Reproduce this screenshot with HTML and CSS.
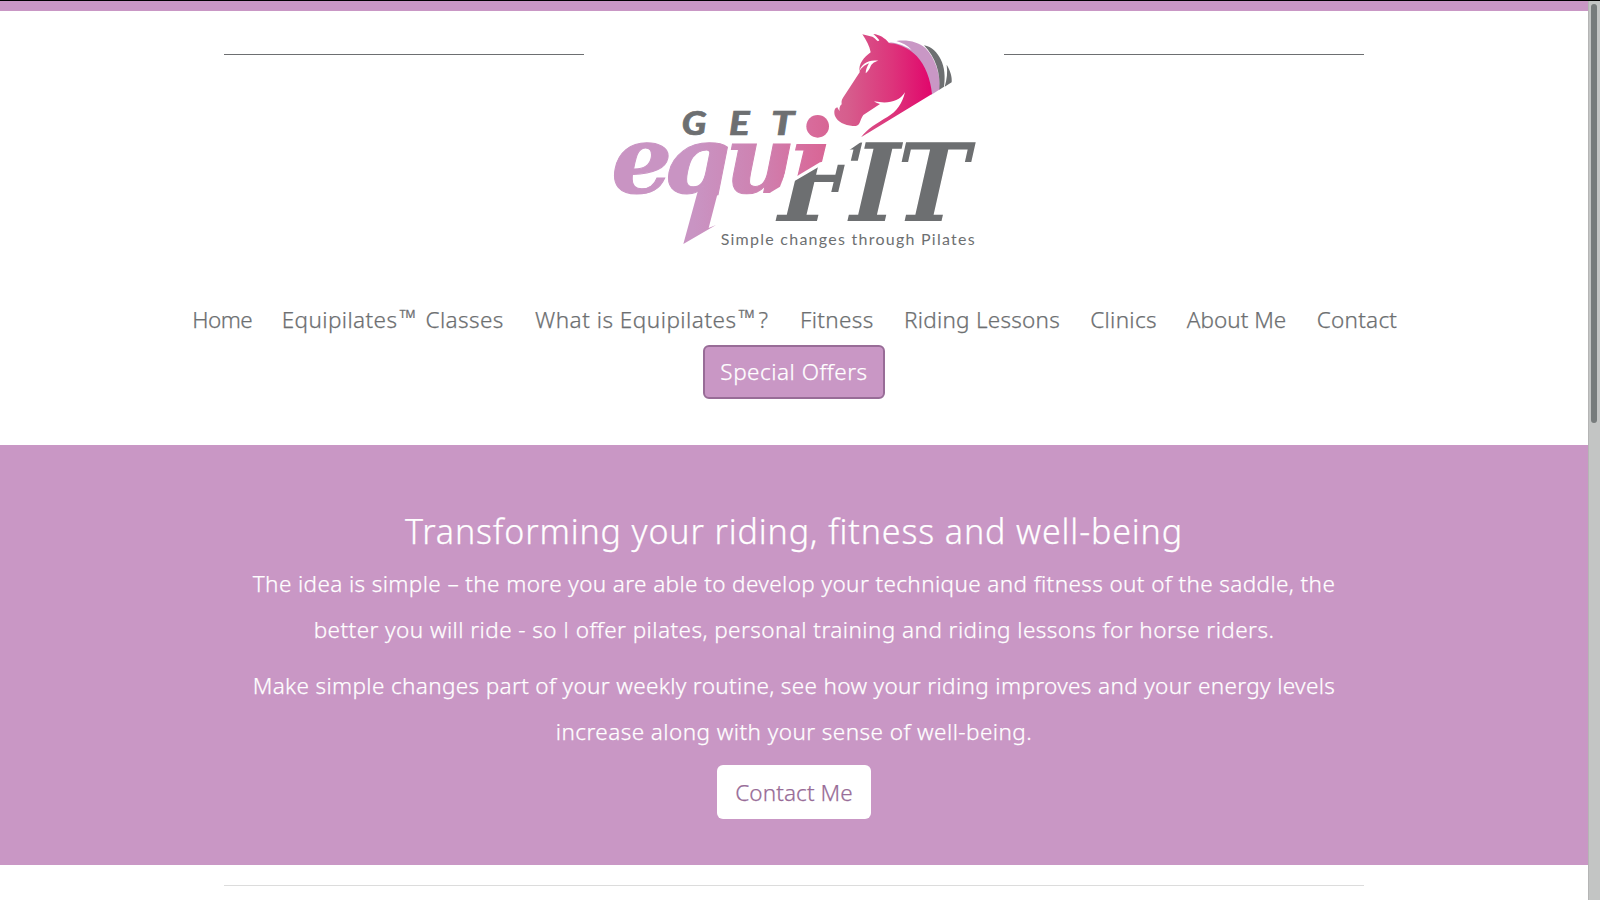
FILE: index.html
```html
<!DOCTYPE html>
<html lang="en">
<head>
<meta charset="utf-8">
<title>Get Equifit</title>
<link rel="stylesheet" href="styles.css">
</head>
<body>
<div class="page">
  <header class="header">
    <div class="brand">
      <hr class="rule">
      <svg class="logo" viewBox="-18 0 1200 720" role="img" aria-label="Get Equifit">
        <defs>
          <linearGradient id="pink" gradientUnits="userSpaceOnUse" x1="280" y1="0" x2="1000" y2="0">
            <stop offset="0" stop-color="#c994c3"/>
            <stop offset=".27" stop-color="#ce82b1"/>
            <stop offset=".5" stop-color="#d86a9a"/>
            <stop offset=".64" stop-color="#d65e8d"/>
            <stop offset=".83" stop-color="#dd347b"/>
            <stop offset="1" stop-color="#e1046b"/>
          </linearGradient>
          <clipPath id="above"><path d="M180 340H420V526H180z"/></clipPath>
          <clipPath id="ucut"><path d="M370 340H600L540 500L500 524H370z"/></clipPath>
          <clipPath id="icut"><path d="M560 367L690 361V420L660 427L585 472L560 480z"/></clipPath>
          <clipPath id="fcut"><path d="M500 530L580 485L662 437L745 392L782 367H800V620H500z"/></clipPath>
        </defs>
        <g class="get">
          <text x="245" y="346" textLength="74" lengthAdjust="spacingAndGlyphs">G</text><text x="387" y="346" textLength="62" lengthAdjust="spacingAndGlyphs">E</text><text x="513" y="346" textLength="70" lengthAdjust="spacingAndGlyphs">T</text>
        </g>
        <g class="equi">
          <text x="34" y="519" textLength="183" lengthAdjust="spacingAndGlyphs">e</text>
          <g clip-path="url(#above)"><text x="192" y="519" textLength="200" lengthAdjust="spacingAndGlyphs">q</text></g>
          <path d="M297 500L250 672L348 615L326 624L358 500z"/>
          <g clip-path="url(#ucut)"><text x="376" y="519" textLength="211" lengthAdjust="spacingAndGlyphs">u</text></g>
          <g clip-path="url(#icut)"><text x="562" y="519" textLength="132" lengthAdjust="spacingAndGlyphs">ı</text></g>
          <circle cx="653" cy="319" r="34"/>
        </g>
        <g class="fit">
          <g clip-path="url(#fcut)"><text transform="translate(534 604) skewX(-3)" textLength="222" lengthAdjust="spacingAndGlyphs">F</text></g>
          <text transform="translate(749 604) skewX(-3)" textLength="140" lengthAdjust="spacingAndGlyphs">I</text>
          <text transform="translate(882 604) skewX(-3)" textLength="215" lengthAdjust="spacingAndGlyphs">T</text>
        </g>
        <text class="tagline" x="362" y="675" textLength="762">Simple changes through Pilates</text>
        <g transform="translate(660 0)">
          <path fill="#c997c5" d="M205 69C215 66 225 68 235 72C250 76 260 82 275 90C262 76 246 68 229 63C262 58 295 66 316 84C346 115 360 160 360 208L334 224C320 140 290 84 205 69z"/>
          <path fill="#6d6f71" d="M312 76C336 80 352 98 362 118C374 142 376 170 372 200L358 209C362 160 347 112 312 76zM380 134C390 150 397 170 395 187L374 200C381 176 383 158 380 134z"/>
        </g>
        <path fill="url(#pink)" d="M787 43L817 50C822 52 827 58 834 64L838 61C833 54 827 48 820 42C838 44 856 54 867 69C898 72 927 84 950 108C976 136 992 178 996 222L783 352C802 326 830 310 862 291C890 276 907 250 915 217C896 247 862 252 822 244C828 249 834 251 840 252L790 285C785 291 783 300 779 308C776 315 770 319 758 318C734 316 712 306 705 288C701 276 703 264 712 262C714 266 716 270 719 273C717 265 719 258 725 253C725 248 723 242 729 233L779 157C774 132 792 112 812 97C809 78 799 62 787 43z"/>
        <path fill="#fff" d="M776 157C784 130 806 118 835 122C820 126 814 132 810 143C806 151 802 156 797 160C797 149 802 139 807 130C792 136 784 144 776 157z"/>
      </svg>
      <hr class="rule">
    </div>
    <nav class="nav">
      <a class="item home">Home</a><a class="item classes">Equipilates<span class="tm">™</span> Classes</a><a class="item what">What is Equipilates<span class="tm">™</span>?</a><a class="item fitness">Fitness</a><a class="item lessons">Riding Lessons</a><a class="item clinics">Clinics</a><a class="item about">About Me</a><a class="item contact">Contact</a>
    </nav>
    <a class="button offers">Special Offers</a>
  </header>
  <main>
    <section class="hero">
      <h1>Transforming your riding, fitness and well-being</h1>
      <p><span class="l1">The idea is simple – the more you are able to develop your technique and fitness out of the saddle, the</span><br><span class="l2">better you will ride - so <span class="plain">I</span> offer pilates, personal training and riding lessons for horse riders.</span></p>
      <p><span class="l3">Make simple changes part of your weekly routine, see how your riding improves and your energy levels</span><br><span class="l4">increase along with your sense of well-being.</span></p>
      <a class="button me">Contact Me</a>
    </section>
    <hr class="divider">
  </main>
</div>
<div class="scrollbar"><div class="thumb"></div></div>
</body>
</html>
```
FILE: styles.css
```css
* { box-sizing: border-box; }
body {
  margin: 0;
  height: 900px;
  overflow: hidden;
  display: flex;
  border-top: 1px solid #000;
  background: #fff;
  font: 300 22.5px/46px "Noto Sans", sans-serif;
  color: #6d6f71;
}
.page { width: 1588px; border-top: 10px solid #c997c5; }
.scrollbar { width: 12px; padding: 3px 3px 0 2px; background: #c3c5c4; border-left: 1px solid #b5b5b5; }
.thumb { width: 6px; height: 419px; border-radius: 3px; background: #777c7c; }

.header { height: 434px; display: flex; flex-direction: column; align-items: center; }
.brand { width: 1140px; height: 276px; padding-top: 9px; display: flex; justify-content: space-between; align-items: flex-start; }
.rule { width: 360px; margin: 34px 0 0; border: 0; border-top: 1px solid #6d6f71; }
.logo { width: 400px; height: 240px; }
.get { font: italic 900 98px Lato, sans-serif; fill: #6d6f71; stroke: #6d6f71; stroke-width: 2; }
.equi { font: italic bold 282px "DejaVu Serif", serif; fill: url(#pink); }
.equi text { stroke: url(#pink); stroke-width: 3; }
.fit { font: italic bold 324px "DejaVu Serif", serif; fill: #6d6f71; }
.tagline { font: 400 48px Lato, sans-serif; fill: #6d6f71; }

.nav, .button, .hero { -webkit-text-stroke: .25px currentColor; }
.nav { display: flex; width: 1235px; margin-left: 2px; height: 58px; padding-top: 10px; line-height: 46px; }
.item { text-align: center; white-space: nowrap; }
.tm { position: relative; top: -2px; line-height: 1; margin: 0 3px 0 2px; }
.home { width: 89.5px; letter-spacing: -.5px; }
.classes { width: 251.5px; letter-spacing: .4px; }
.what { width: 266.5px; letter-spacing: .5px; }
.fitness { width: 103.5px; letter-spacing: .35px; }
.lessons { width: 187px; letter-spacing: .25px; }
.clinics { width: 96px; letter-spacing: .3px; }
.about { width: 130px; letter-spacing: 0; }
.contact { width: 111px; letter-spacing: .25px; }

.button { display: block; height: 54px; border-radius: 6px; line-height: 50px; text-align: center; }
.offers { width: 182px; border: 2px solid #986c97; background: #c997c5; color: #fff; letter-spacing: .5px; }
.hero { height: 420px; padding-top: 62px; background: #c997c5; color: #fff; text-align: center; }
h1 { margin: 0 0 6px; font-size: 34px; font-weight: 300; line-height: 48px; letter-spacing: .87px; }
p { margin: 0 0 10px; white-space: nowrap; }
.l1 { letter-spacing: .39px; }
.l2 { letter-spacing: .44px; }
.l3 { letter-spacing: .355px; }
.l4 { letter-spacing: .44px; }
.plain { font-family: "Open Sans", sans-serif; }
.me { width: 154px; margin: 0 auto; line-height: 55px; background: #fff; color: #986c97; letter-spacing: .1px; }
.divider { width: 1140px; margin: 20px auto 0; border: 0; border-top: 1px solid #dcdcdc; }
```
